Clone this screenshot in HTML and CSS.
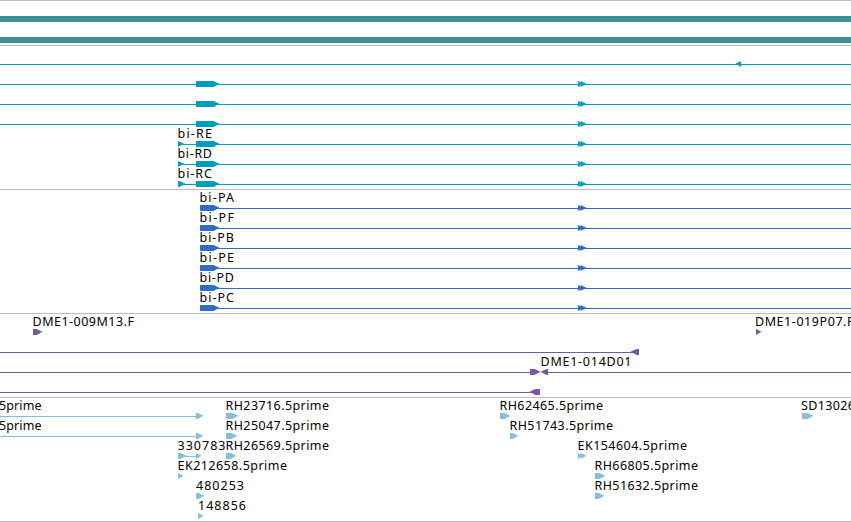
FILE: index.html
```html
<!DOCTYPE html>
<html lang="en">
<head>
<meta charset="utf-8">
<title>Genome tracks</title>
<link rel="stylesheet" href="styles.css">
</head>
<body>
<main class="browser"></main>
<script src="tracks.js"></script>
</body>
</html>
```
FILE: styles.css
```css
body {
  margin: 0;
  background: #fff;
}

.browser {
  width: 851px;
  height: 522px;
  overflow: hidden;
}

.track {
  border-top: 1px solid #bebebe;
  padding-bottom: 3px;
}

.track:last-child {
  border-bottom: 1px solid #bebebe;
}

.contigs {
  padding-bottom: 2px;
}

.contig {
  height: 6px;
  padding-top: 15px;
  background: #3f8f95 content-box;
}

.row {
  display: block;
  width: 851px;
  height: 20px;
  overflow: visible;
  font-family: "Noto Sans", sans-serif;
  font-size: 12.5px;
}

.transcripts { color: #009dbf; }
.proteins { color: #316bca; }
.clones { color: #7658a7; }
.reads { color: #87bddd; }

.line,
.feature {
  fill: currentColor;
}

.line {
  shape-rendering: crispEdges;
}

.label {
  fill: #000;
}
```
FILE: tracks.js
```js
// Items: ["line", start, end], ["right" | "left", start, end], ["label", start, width, text]
const pair = [["right", 578, 583], ["right", 580.5, 586.5]];
const exon = [["right", 196, 219.5], ...pair];
const full = [["line", 0, 851], ...exon];
const transcript = (name, end) => [
  ["line", 178, 851], ["right", 178, end], ...exon, ["label", 177.5, 34.5, name]
];
const protein = name => [
  ["line", 200, 851], ["right", 200, 219.5], ...pair, ["label", 199.5, 34.5, name]
];

const tracks = [
  ["transcripts", [
    [["line", 0, 851], ["left", 735.5, 741]],
    full, full, full,
    transcript("bi-RE", 184), transcript("bi-RD", 184), transcript("bi-RC", 185.5)
  ]],
  ["proteins", ["bi-PA", "bi-PF", "bi-PB", "bi-PE", "bi-PD", "bi-PC"].map(protein)],
  ["clones", [
    [["right", 33, 42.5], ["right", 756, 761.5], ["label", 32.5, 101.5, "DME1-009M13.F"], ["label", 755, 98.5, "DME1-019P07.F"]],
    [["line", 0, 639], ["left", 630.5, 639]],
    [["line", 0, 531], ["right", 530, 540.5], ["line", 547, 851], ["left", 540.5, 548], ["label", 540.5, 91, "DME1-014D01"]],
    [["line", 0, 540], ["left", 529.5, 540]]
  ]],
  ["reads", [
    [["line", 0, 196], ["right", 196, 203.5], ["right", 226, 238.5], ["right", 500, 510.5], ["right", 802, 813.5],
      ["label", -1, 42.5, "5prime"], ["label", 225.5, 103.5, "RH23716.5prime"],
      ["label", 499.5, 103.5, "RH62465.5prime"], ["label", 801, 102, "SD13026.5prime"]],
    [["line", 0, 196], ["right", 196, 203.5], ["right", 226, 237.5], ["right", 510, 518.5],
      ["label", -1, 42.5, "5prime"], ["label", 225.5, 103.5, "RH25047.5prime"], ["label", 509.5, 103.5, "RH51743.5prime"]],
    [["line", 178, 196], ["right", 178, 186.5], ["right", 196, 201.5], ["right", 226, 236.5], ...pair,
      ["label", 177.5, 48, "330783"], ["label", 225.5, 103.5, "RH26569.5prime"], ["label", 577.5, 109.5, "EK154604.5prime"]],
    [["right", 178, 183.5], ["right", 595, 605.5], ["label", 177.5, 109.5, "EK212658.5prime"], ["label", 594.5, 103.5, "RH66805.5prime"]],
    [["right", 196, 204.5], ["right", 595, 604.5], ["label", 196, 48, "480253"], ["label", 594.5, 103.5, "RH51632.5prime"]],
    [["right", 198, 203.5], ["label", 198, 48, "148856"]]
  ]]
];

function draw([kind, a, b, text]) {
  if (kind === "line") {
    return `<rect class="line" x="${a}" y="18" width="${b - a}" height="1"/>`;
  }
  if (kind === "label") {
    return `<text class="label" x="${a}" y="12" textLength="${b}">${text}</text>`;
  }
  const head = Math.min(6, b - a);
  const points = kind === "right"
    ? `${a},15 ${b - head},15 ${b},17.7 ${b - head},21 ${a},21`
    : `${b},15 ${a + head},15 ${a},17.7 ${a + head},21 ${b},21`;
  return `<polygon class="feature" points="${points}"/>`;
}

document.querySelector(".browser").innerHTML =
  `<section class="track contigs"><div class="contig"></div><div class="contig"></div></section>` +
  tracks.map(([name, rows]) =>
    `<section class="track ${name}">` +
    rows.map(items => `<svg class="row">${items.map(draw).join("")}</svg>`).join("") +
    `</section>`
  ).join("");
```
